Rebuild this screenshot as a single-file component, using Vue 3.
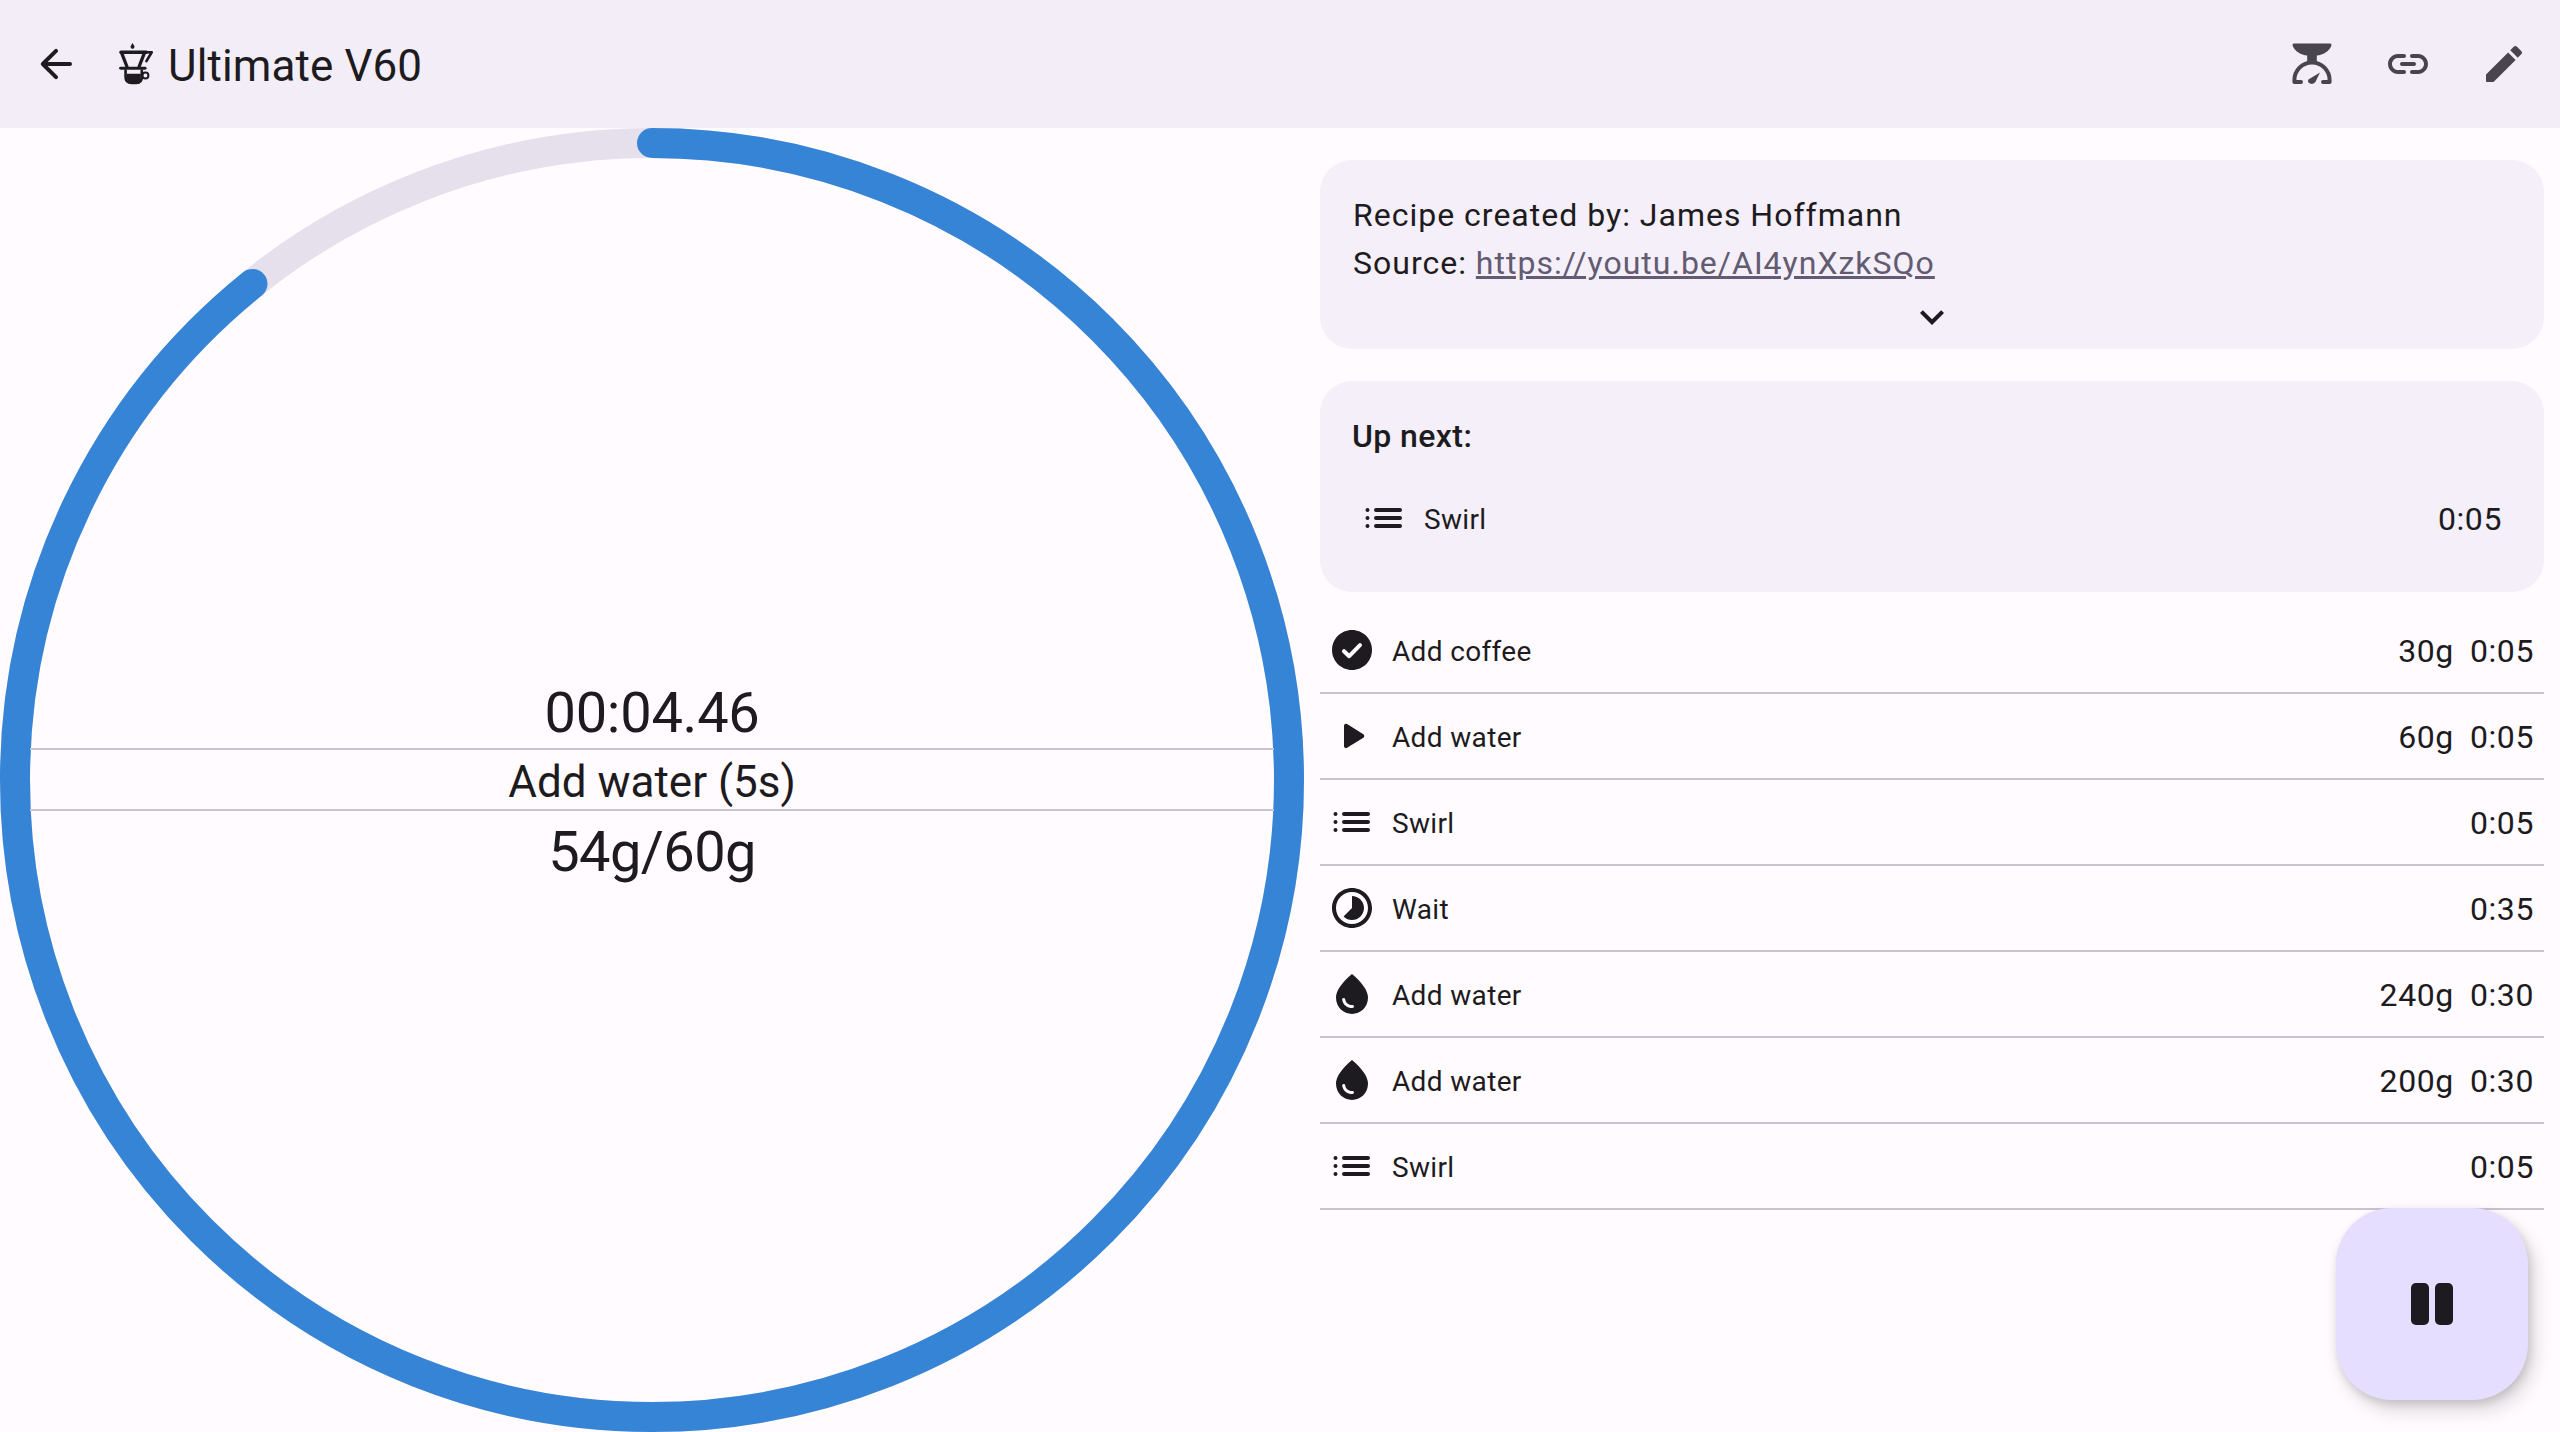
<script setup>
const icons = {
  done: 'M12 2C6.48 2 2 6.48 2 12s4.48 10 10 10 10-4.48 10-10S17.52 2 12 2z',
  play: 'M8 17.175V6.825q0-.425.3-.713.3-.287.7-.287.125 0 .263.037.137.038.262.113L17.675 11.15q.225.15.337.375.113.225.113.475t-.113.475q-.112.225-.337.375L9.525 17.925q-.125.075-.262.113-.138.037-.263.037-.4 0-.7-.288-.3-.287-.3-.712Z',
  wait: 'M16.24 7.76C15.07 6.59 13.54 6 12 6v6l-4.24 4.24c2.34 2.34 6.14 2.34 8.49 0 2.34-2.34 2.34-6.14-.01-8.48zM12 2C6.48 2 2 6.48 2 12s4.48 10 10 10 10-4.48 10-10S17.52 2 12 2zm0 18c-4.42 0-8-3.58-8-8s3.58-8 8-8 8 3.58 8 8-3.58 8-8 8z',
  water: 'M12 2c-5.33 4.55-8 8.48-8 11.8 0 4.98 3.8 8.2 8 8.2s8-3.22 8-8.2c0-3.32-2.67-7.25-8-11.8zM7.83 14c.37 0 .67.26.74.62.41 2.22 2.28 2.98 3.64 2.87.43-.02.79.32.79.75 0 .4-.32.73-.72.75-2.13.13-4.62-1.09-5.19-4.12-.08-.45.28-.87.74-.87z',
  list: 'M3.75 7A1 1 0 1 0 3.75 9 1 1 0 1 0 3.75 7zM3.75 11A1 1 0 1 0 3.75 13 1 1 0 1 0 3.75 11zM3.75 15A1 1 0 1 0 3.75 17 1 1 0 1 0 3.75 15zM8 7H20a1 1 0 0 1 0 2H8a1 1 0 0 1 0-2zM8 11H20a1 1 0 0 1 0 2H8a1 1 0 0 1 0-2zM8 15H20a1 1 0 0 1 0 2H8a1 1 0 0 1 0-2z',
}

const steps = [
  { icon: 'done', name: 'Add coffee', amount: '30g', time: '0:05' },
  { icon: 'play', name: 'Add water', amount: '60g', time: '0:05' },
  { icon: 'list', name: 'Swirl', amount: '', time: '0:05' },
  { icon: 'wait', name: 'Wait', amount: '', time: '0:35' },
  { icon: 'water', name: 'Add water', amount: '240g', time: '0:30' },
  { icon: 'water', name: 'Add water', amount: '200g', time: '0:30' },
  { icon: 'list', name: 'Swirl', amount: '', time: '0:05' },
]

const radius = 637
const circumference = 2 * Math.PI * radius
const progress = 4.46 / 5
const dash = `${circumference * progress} ${circumference}`
</script>

<template>
  <div class="page">
    <header class="app-bar">
      <button class="icon-btn">
        <svg viewBox="0 0 24 24" class="icon"><path d="M19 11H7.83l4.88-4.88c.39-.39.39-1.03 0-1.42-.39-.39-1.02-.39-1.41 0l-6.59 6.59c-.39.39-.39 1.02 0 1.41l6.59 6.59c.39.39 1.02.39 1.41 0 .39-.39.39-1.02 0-1.41L7.83 13H19c.55 0 1-.45 1-1s-.45-1-1-1z"/></svg>
      </button>
      <svg class="v60" viewBox="355 125 110 130">
        <path d="M398 125l5 8a6 6 0 1 1-10 0z" />
        <g fill="none" stroke="currentColor" stroke-linecap="round" stroke-linejoin="round">
          <path d="M363 153H440" stroke-width="10" />
          <path d="M365 155L381 196M434 155L418 196" stroke-width="10" />
          <path d="M438 153H456L440 180" stroke-width="8" />
          <path d="M362 201H436" stroke-width="9" />
          <path d="M377 208V228Q377 246 395 246H410Q426 246 426 228V208" stroke-width="8" />
          <circle cx="437" cy="223" r="9" stroke-width="6" />
        </g>
        <path d="M381 218H423V230Q423 244 408 244H396Q381 244 381 230z" />
      </svg>
      <h1 class="title">Ultimate V60</h1>
      <div class="actions">
        <button class="icon-btn">
          <svg viewBox="0 0 24 24" class="icon">
            <path d="M3 1.8H21Q22 1.8 21.7 2.8C20.6 5.8 17.5 7.6 14.4 7.8V10.6L9.6 10.6V7.8C6.5 7.6 3.4 5.8 2.3 2.8Q2 1.8 3 1.8z" />
            <path d="M6.5 21H3.2V20A8.8 8.8 0 0 1 20.8 20V21H17.5" fill="none" stroke="currentColor" stroke-width="2" stroke-linecap="round" stroke-linejoin="round" />
            <path d="M10.2 19.8L16 16.2L13.7 21Q12.5 22.3 11 21.8Q9.5 21 10.2 19.8z" />
          </svg>
        </button>
        <button class="icon-btn">
          <svg viewBox="0 0 24 24" class="icon"><path d="M17 7h-3c-.55 0-1 .45-1 1s.45 1 1 1h3c1.65 0 3 1.35 3 3s-1.35 3-3 3h-3c-.55 0-1 .45-1 1s.45 1 1 1h3c2.76 0 5-2.24 5-5s-2.24-5-5-5zm-9 5c0 .55.45 1 1 1h6c.55 0 1-.45 1-1s-.45-1-1-1H9c-.55 0-1 .45-1 1zm2 3H7c-1.65 0-3-1.35-3-3s1.35-3 3-3h3c.55 0 1-.45 1-1s-.45-1-1-1H7c-2.76 0-5 2.24-5 5s2.24 5 5 5h3c.55 0 1-.45 1-1s-.45-1-1-1z"/></svg>
        </button>
        <button class="icon-btn">
          <svg viewBox="0 0 24 24" class="icon"><path d="M3 17.46v3.04c0 .28.22.5.5.5h3.04c.13 0 .26-.05.35-.15L17.81 9.94l-3.75-3.75L3.15 17.1c-.1.1-.15.23-.15.36zM20.71 7.04c.39-.39.39-1.02 0-1.41l-2.34-2.34c-.39-.39-1.02-.39-1.41 0l-1.83 1.83 3.75 3.75 1.83-1.83z"/></svg>
        </button>
      </div>
    </header>

    <main class="content">
      <section class="timer">
        <svg class="ring" viewBox="0 0 1304 1304">
          <circle cx="652" cy="652" :r="radius" class="track" />
          <circle cx="652" cy="652" :r="radius" class="bar" :stroke-dasharray="dash" transform="rotate(-90 652 652)" />
        </svg>
        <div class="readout">
          <div class="stat stat-top">00:04.46</div>
          <div class="current">Add water (5s)</div>
          <div class="stat stat-bottom">54g/60g</div>
        </div>
      </section>

      <section class="side">
        <div class="card info">
          <p>Recipe created by: James Hoffmann</p>
          <p>Source: <a href="#">https://youtu.be/AI4ynXzkSQo</a></p>
          <svg viewBox="0 0 24 24" class="icon chevron"><path d="M16.59 8.59L12 13.17 7.41 8.59 6 10l6 6 6-6z"/></svg>
        </div>

        <div class="card next">
          <h2>Up next:</h2>
          <div class="step next-step">
            <svg viewBox="0 0 24 24" class="icon"><path :d="icons.list"/></svg>
            <span class="name">Swirl</span>
            <span class="time">0:05</span>
          </div>
        </div>

        <ul class="steps">
          <li v-for="(step, i) in steps" :key="i" class="step">
            <svg viewBox="0 0 24 24" class="icon">
              <path :d="icons[step.icon]"/>
              <path v-if="step.icon === 'done'" d="M8 12.6L10.6 15.1L16 9.6" class="tick"/>
            </svg>
            <span class="name">{{ step.name }}</span>
            <span v-if="step.amount" class="amount">{{ step.amount }}</span>
            <span class="time">{{ step.time }}</span>
          </li>
        </ul>
      </section>
    </main>

    <button class="fab">
      <span class="pause"></span>
      <span class="pause"></span>
    </button>
  </div>
</template>

<style>
html, body {
  margin: 0;
  background: #fffbff;
}
</style>

<style scoped>
.page {
  width: 2560px;
  height: 1432px;
  position: relative;
  overflow: hidden;
  font-family: Roboto, sans-serif;
  color: #1d1b20;
}

.app-bar {
  height: 128px;
  display: flex;
  align-items: center;
  padding: 0 8px;
  box-sizing: border-box;
  background: #f3edf7;
}

.icon-btn {
  width: 96px;
  height: 96px;
  padding: 0;
  border: none;
  background: none;
  color: inherit;
  display: flex;
  align-items: center;
  justify-content: center;
}

.icon {
  width: 48px;
  height: 48px;
  flex: none;
  fill: currentColor;
}

.v60 {
  width: 37px;
  height: 43px;
  margin: 0 13px 0 14px;
  fill: currentColor;
}

.title {
  margin: 3px 0 0;
  font-size: 44px;
  font-weight: 400;
  line-height: 56px;
  letter-spacing: 0.1px;
}

.actions {
  margin-left: auto;
  display: flex;
  color: #49454f;
}

.content {
  display: flex;
  height: 1304px;
}

.timer {
  width: 1304px;
  height: 1304px;
  flex: none;
  position: relative;
}

.ring {
  display: block;
  width: 1304px;
  height: 1304px;
}

.ring circle {
  fill: none;
  stroke-width: 30;
}

.track {
  stroke: #e6e0ec;
}

.bar {
  stroke: #3684d6;
  stroke-linecap: round;
}

.readout {
  position: absolute;
  inset: 0 30px 1px;
  display: flex;
  flex-direction: column;
  justify-content: center;
  text-align: center;
}

.stat {
  height: 74px;
  box-sizing: border-box;
  font-size: 56px;
  line-height: 66px;
}

.stat-top {
  padding-top: 6px;
  letter-spacing: -0.25px;
}

.stat-bottom {
  padding-top: 8px;
  letter-spacing: -0.6px;
}

.current {
  height: 63px;
  box-sizing: border-box;
  border-top: 2px solid #cac4d0;
  border-bottom: 2px solid #cac4d0;
  font-size: 44px;
  line-height: 64px;
}

.side {
  flex: 1;
  padding: 32px 16px 0;
  min-width: 0;
}

.card {
  background: #f4eff8;
  border-radius: 32px;
  padding: 32px 32px 0;
}

.info {
  height: 189px;
  box-sizing: border-box;
  margin-bottom: 32px;
  padding: 31px 32px 0 33px;
  font-size: 32px;
  line-height: 48px;
  letter-spacing: 1px;
}

.info p {
  margin: 0;
}

.info a {
  color: #625b71;
}

.chevron {
  display: block;
  margin: 6px auto 0;
  transform: translateX(-1px);
}

.next {
  height: 211px;
  box-sizing: border-box;
}

.next h2 {
  margin: 0;
  font-size: 32px;
  font-weight: 500;
  line-height: 46px;
  letter-spacing: 0.4px;
}

.steps {
  list-style: none;
  margin: 16px 0 0;
  padding: 0;
}

.step {
  height: 86px;
  box-sizing: border-box;
  display: flex;
  align-items: center;
  padding: 0 8px;
  border-bottom: 2px solid #cac4d0;
}

.next-step {
  height: 84px;
  margin-top: 17px;
  border-bottom: none;
}

.name {
  margin: 2px 0 0 16px;
  font-size: 28px;
  font-weight: 450;
  letter-spacing: 0.35px;
}

.amount {
  margin: 2px 0 0 auto;
  font-size: 32px;
  letter-spacing: 0.6px;
}

.time {
  margin: 2px 2px 0 16px;
  font-size: 32px;
  letter-spacing: 0.6px;
}

.name + .time {
  margin-left: auto;
}

.tick {
  fill: none;
  stroke: #fffbff;
  stroke-width: 2;
  stroke-linecap: round;
  stroke-linejoin: round;
}

.fab {
  position: absolute;
  right: 32px;
  bottom: 32px;
  width: 192px;
  height: 192px;
  padding: 0;
  border: none;
  border-radius: 56px;
  background: #e5deff;
  box-shadow: 6px 10px 18px 2px rgba(0, 0, 0, 0.12), 2px 4px 8px rgba(0, 0, 0, 0.14);
  display: flex;
  align-items: center;
  justify-content: center;
  gap: 6px;
}

.pause {
  width: 18px;
  height: 42px;
  border-radius: 5px;
  background: #1d1b20;
}
</style>
